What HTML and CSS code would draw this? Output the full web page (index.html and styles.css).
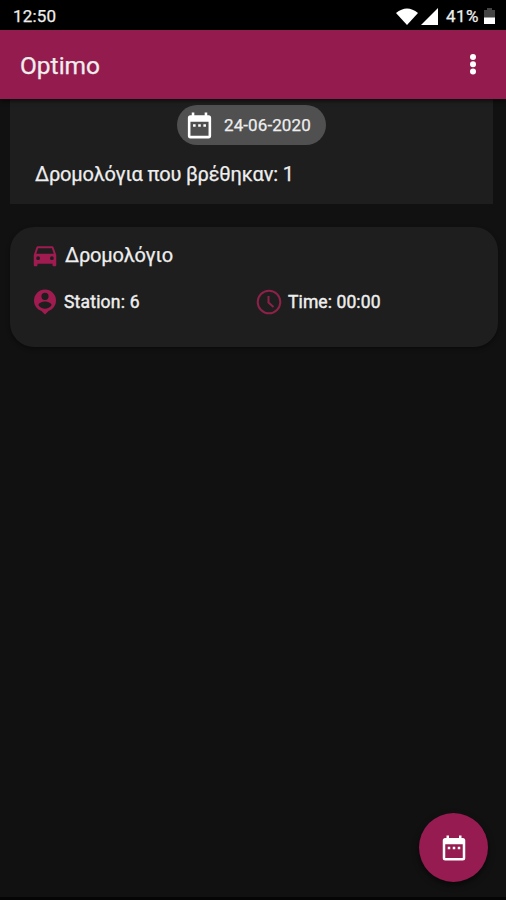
FILE: index.html
```html
<!DOCTYPE html>
<html lang="el">
<head>
<meta charset="utf-8">
<title>Optimo</title>
<link rel="stylesheet" href="styles.css">
</head>
<body>
<svg class="defs" aria-hidden="true">
  <symbol id="calendar" viewBox="0 0 24 24"><path fill-rule="evenodd" d="M9 11H7v2h2zm4 0h-2v2h2zm4 0h-2v2h2zm2-7h-1V2h-2v2H8V2H6v2H5a2 2 0 0 0-2 2v14a2 2 0 0 0 2 2h14a2 2 0 0 0 2-2V6a2 2 0 0 0-2-2zm0 16H5V9h14z"/></symbol>
</svg>
<div class="status">
  <span class="clock">12:50</span>
  <svg class="wifi" viewBox="0 0 22 17"><path d="M0 5Q11-4 22 5L11 17z"/></svg>
  <svg class="signal" viewBox="0 0 17 17"><path d="M17 0v17H0z"/></svg>
  <span class="percent">41%</span>
  <svg class="battery" viewBox="0 0 11 17"><path fill="#444" d="M3 0h5v2h3v8H0V2h3z"/><path d="M0 9.500h11V16H0z"/></svg>
</div>
<header class="appbar">
  <h1>Optimo</h1>
  <svg class="more" viewBox="0 0 8 22"><circle cx="4" cy="4" r="3"/><circle cx="4" cy="11.300" r="3"/><circle cx="4" cy="18.600" r="3"/></svg>
</header>
<main>
  <section class="summary">
    <div class="chip"><svg><use href="#calendar"/></svg><span>24-06-2020</span></div>
    <p>Δρομολόγια που βρέθηκαν: 1</p>
  </section>
  <article class="card">
    <div class="heading">
      <svg class="icon" viewBox="0 0 24 24"><path d="M18.920 6.010C18.720 5.420 18.160 5 17.500 5h-11c-.66 0-1.210.42-1.420 1.010L3 12v8c0 .55.45 1 1 1h1c.55 0 1-.45 1-1v-1h12v1c0 .55.45 1 1 1h1c.55 0 1-.45 1-1v-8zM6.500 16a1.500 1.500 0 1 1 0-3 1.500 1.500 0 0 1 0 3zm11 0a1.500 1.500 0 1 1 0-3 1.500 1.500 0 0 1 0 3zM5 11l1.500-4.500h11L19 11z"/></svg>
      <h2>Δρομολόγιο</h2>
    </div>
    <div class="details">
      <div class="detail">
        <svg class="icon" viewBox="0 0 30 30"><path fill-rule="evenodd" d="M15 2.500A11 11 0 0 0 4 13.500C4 18.500 7 22.500 11.500 24L15 27.500 18.500 24C23 22.500 26 18.500 26 13.500A11 11 0 0 0 15 2.500zm0 3.200a3.600 3.600 0 1 1 0 7.200 3.600 3.600 0 0 1 0-7.200zM8.500 18.200c0-2.300 4.300-3.600 6.500-3.600s6.500 1.300 6.500 3.600a7.800 7.800 0 0 1-13 0z"/></svg>
        <span class="station">Station: 6</span>
      </div>
      <div class="detail">
        <svg class="icon outline" viewBox="0 0 30 30"><circle cx="15" cy="15" r="11.300"/><path d="M14.500 9v6.500l5 4.500"/></svg>
        <span class="time">Time: 00:00</span>
      </div>
    </div>
  </article>
</main>
<button class="fab" aria-label="24-06-2020"><svg><use href="#calendar"/></svg></button>
</body>
</html>
```

FILE: styles.css
```css
* { box-sizing: border-box; }
body {
  margin: 0;
  height: 900px;
  overflow: hidden;
  display: flex;
  flex-direction: column;
  background: #111;
  color: #eee;
  font-family: Roboto, "Noto Sans", sans-serif;
  -webkit-text-stroke: .25px;
  border-bottom: 3px solid #050505;
}
h1, h2, p { margin: 0; font-weight: 400; white-space: nowrap; }
svg { display: block; flex: none; fill: #fff; }
span { white-space: nowrap; }
.defs { position: absolute; width: 0; height: 0; }
.status {
  height: 30px;
  flex: none;
  display: flex;
  align-items: center;
  padding: 2px 11px 0 13px;
  background: #000;
  font-size: 17px;
}
.clock { margin-right: auto; letter-spacing: .2px; }
.wifi { width: 22px; height: 17px; }
.signal { width: 17px; height: 17px; margin-left: 3px; }
.percent { width: 33px; margin: 0 5px 0 8px; letter-spacing: .4px; }
.battery { width: 11px; height: 17px; }
.appbar {
  position: relative;
  height: 69px;
  flex: none;
  display: flex;
  align-items: center;
  justify-content: space-between;
  padding: 0 29px 0 20px;
  background: #941b4d;
  box-shadow: 0 2px 4px #0009;
}
h1 { font-size: 24.500px; letter-spacing: 0; padding-top: 1px; }
.more { width: 8px; height: 22px; margin-top: -1px; }
.summary {
  height: 105px;
  margin: 0 13px 0 10px;
  padding: 6px 25px 0;
  background: #1e1e1e;
}
.chip {
  width: 149px;
  height: 40px;
  margin: 0 0 0 142px;
  padding-left: 7px;
  display: flex;
  align-items: center;
  gap: 9px;
  border-radius: 20px;
  background: #505050;
  font-size: 17px;
  letter-spacing: .1px;
}
.chip svg { width: 31px; height: 31px; }
.summary p { margin-top: 17px; font-size: 20px; line-height: 24px; letter-spacing: -.19px; }
.card {
  height: 120px;
  margin: 23px 8px 0 10px;
  padding: 13px 20px 0 20px;
  border-radius: 24px;
  background: #1e1e1e;
  box-shadow: 0 2px 4px #0006;
}
.heading, .detail { display: flex; align-items: center; }
.heading { gap: 5px; height: 30px; }
h2 { font-size: 20px; letter-spacing: -.19px; }
.details { display: grid; grid-template-columns: 224px 1fr; margin-top: 17px; }
.detail { gap: 4px; font-size: 17.500px; }
.station { letter-spacing: .2px; }
.time { letter-spacing: .1px; }
.icon { width: 30px; height: 30px; fill: #a01b50; }
.detail span { margin-top: -1px; -webkit-text-stroke: .45px; }
.outline { fill: none; stroke: #8d2149; stroke-width: 2; }
.fab {
  position: absolute;
  right: 18px;
  bottom: 18px;
  width: 69px;
  height: 69px;
  padding: 0;
  border: 0;
  border-radius: 50%;
  display: grid;
  place-items: center;
  background: #961b50;
  box-shadow: 0 3px 6px #0008;
}
.fab svg { width: 30px; height: 30px; }
```
